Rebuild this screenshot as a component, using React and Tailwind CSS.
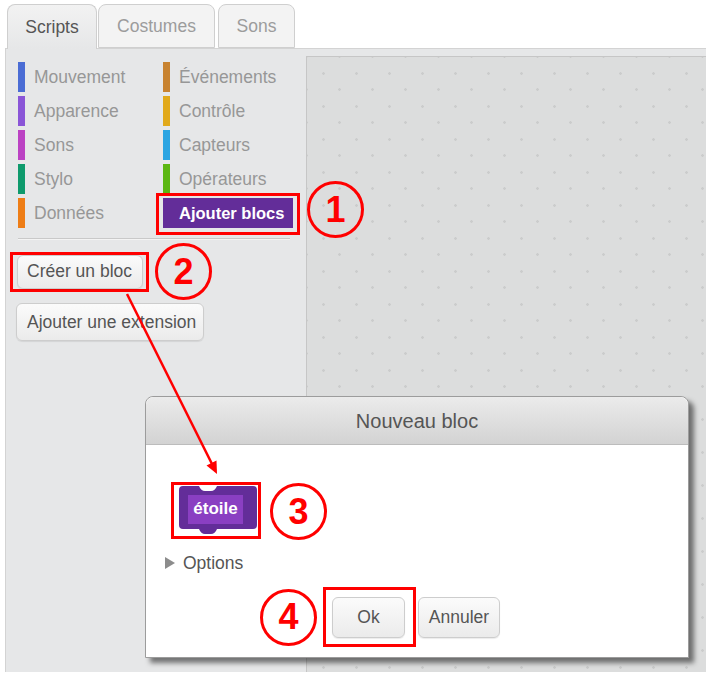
import React from "react";

const rows = [
  [
    { label: "Mouvement", bar: "bg-[#4a6cd4]" },
    { label: "Événements", bar: "bg-[#c88330]" },
  ],
  [
    { label: "Apparence", bar: "bg-[#8a55d7]" },
    { label: "Contrôle", bar: "bg-[#e1a91a]" },
  ],
  [
    { label: "Sons", bar: "bg-[#bb42c3]" },
    { label: "Capteurs", bar: "bg-[#2ca5e2]" },
  ],
  [
    { label: "Stylo", bar: "bg-[#0e9a6c]" },
    { label: "Opérateurs", bar: "bg-[#5cb712]" },
  ],
  [{ label: "Données", bar: "bg-[#ee7d16]" }, null],
];

function Tab({ label, active, className = "" }) {
  return (
    <div
      className={`flex items-center justify-center rounded-t-[8px] border border-[#cfcfcf] text-[17.5px] ${
        active
          ? "relative z-10 -mb-px h-[45px] border-b-0 bg-gradient-to-b from-[#f2f2f2] to-[#e6e7e8] text-[#555]"
          : "h-[44px] bg-[#f3f3f3] text-[#9c9c9c]"
      } ${className}`}
    >
      {label}
    </div>
  );
}

function Category({ item }) {
  return (
    <div className="flex h-[30px] items-center">
      <div className={`h-[30px] w-[7px] ${item.bar}`} />
      <span className="ml-[9px] text-[17.5px] text-[#979797]">{item.label}</span>
    </div>
  );
}

function Circle({ n, className = "" }) {
  return (
    <div
      className={`flex h-[57px] w-[57px] shrink-0 items-center justify-center rounded-full border-[3px] border-[#ff0000] text-[36px] font-bold leading-none text-[#ff0000] ${className}`}
    >
      {n}
    </div>
  );
}

function GrayButton({ children, className = "" }) {
  return (
    <div
      className={`flex items-center rounded-[6px] border border-[#cdcdcd] bg-gradient-to-b from-[#fbfbfb] to-[#ebebeb] text-[17.5px] text-[#555] shadow-[0_1px_1px_rgba(0,0,0,0.08)] ${className}`}
    >
      {children}
    </div>
  );
}

function Block() {
  return (
    <div className="relative h-[48px] w-[78px]">
      <svg width="78" height="48" viewBox="0 0 78 48" className="absolute left-0 top-0">
        <path
          d="M4 0 H20 Q22 5 26 5 H32 Q36 5 38 0 H74 Q78 0 78 4 V39 Q78 43 74 43 H38 Q36 48 32 48 H26 Q22 48 20 43 H4 Q0 43 0 39 V4 Q0 0 4 0 Z"
          fill="#632d99"
        />
      </svg>
      <div className="absolute left-[9px] top-[9px] flex h-[29px] w-[55px] items-center justify-center bg-[#8a3fc2] text-[17px] font-bold text-white">
        étoile
      </div>
    </div>
  );
}

export default function App() {
  return (
    <div className="relative h-[680px] w-[706px] overflow-hidden bg-white font-['Liberation_Sans',Arial,sans-serif]">
      {/* tabs */}
      <div className="flex h-[48px] items-end pl-[7px]">
        <Tab label="Scripts" active className="w-[90px]" />
        <Tab label="Costumes" className="ml-[1px] w-[117px]" />
        <Tab label="Sons" className="ml-[3px] w-[77px]" />
      </div>

      <div className="ml-[5px] flex h-[624px] border-l border-t border-[#d3d3d3] bg-[#e6e7e8]">
        {/* palette */}
        <div className="w-[300px] shrink-0 pt-[13px]">
          <div className="flex flex-col gap-[4px] pl-[12px]">
            {rows.map((row, i) => (
              <div key={i} className="grid grid-cols-[145px_1fr]">
                <Category item={row[0]} />
                {row[1] ? (
                  <Category item={row[1]} />
                ) : (
                  <div className="relative h-[30px]">
                    <div className="flex h-[30px] w-[130px] items-center bg-[#632d99] pl-[16px] text-[16.5px] font-bold text-white">
                      Ajouter blocs
                    </div>
                    <div className="absolute -left-[7px] -top-[5px] h-[42px] w-[144px] border-[3px] border-[#ff0000]" />
                  </div>
                )}
              </div>
            ))}
          </div>

          <div className="ml-[12px] mt-[10px] h-px w-[272px] bg-[#c9c9c9] shadow-[0_1px_0_#f4f4f4]" />

          <div className="ml-[4px] mt-[4px] flex items-center">
            <div className="flex h-[40px] w-[139px] items-center border-[3px] border-[#ff0000] pl-[4px]">
              <GrayButton className="h-[34px] w-[126px] pl-[9px]">Créer un bloc</GrayButton>
            </div>
            <Circle n="2" className="ml-[6px]" />
          </div>

          <GrayButton className="ml-[10px] mt-[3px] h-[38px] w-[188px] pl-[10px]">
            Ajouter une extension
          </GrayButton>
        </div>

        {/* script area */}
        <div className="mt-[7px] flex-1 border-l border-t border-[#c6c6c6] bg-[#dcdddd] bg-[radial-gradient(circle,#cbcccc_1px,transparent_1.6px),radial-gradient(circle,#cbcccc_1px,transparent_1.6px)] bg-[length:33px_33px] bg-[position:0_0,16px_16px]" />
      </div>

      {/* annotation 1 */}
      <Circle n="1" className="absolute left-[307px] top-[181px]" />

      {/* dialog */}
      <div className="absolute left-[145px] top-[396px] flex h-[262px] w-[544px] flex-col rounded-t-[8px] border border-[#9c9c9c] bg-white shadow-[5px_5px_5px_rgba(0,0,0,0.5)]">
        <div className="flex h-[48px] shrink-0 items-center justify-center rounded-t-[8px] border-b border-[#bcbcbc] bg-gradient-to-b from-[#ebebeb] to-[#d3d3d3] text-[20px] text-[#555]">
          Nouveau bloc
        </div>
        <div className="flex flex-col pl-[25px] pt-[35px]">
          <div className="flex items-center">
            <div className="h-[57px] w-[90px] border-[3px] border-[#ff0000] pl-[5px] pt-[1px]">
              <Block />
            </div>
            <Circle n="3" className="ml-[9px] mt-[3px]" />
          </div>

          <div className="-ml-[6px] mt-[13px] flex h-[20px] items-center">
            <svg width="10" height="12" viewBox="0 0 10 12">
              <path d="M0 0 L10 6 L0 12 Z" fill="#8c8c8c" />
            </svg>
            <span className="ml-[8px] text-[17.5px] text-[#555]">Options</span>
          </div>

          <div className="ml-[89px] mt-[14px] flex items-center">
            <Circle n="4" />
            <div className="ml-[6px] flex h-[60px] w-[93px] items-center border-[3px] border-[#ff0000] pl-[6px]">
              <GrayButton className="h-[41px] w-[73px] justify-center">Ok</GrayButton>
            </div>
            <GrayButton className="ml-[2px] h-[41px] w-[82px] justify-center">Annuler</GrayButton>
          </div>
        </div>
      </div>

      {/* arrow 2 -> 3 */}
      <svg className="pointer-events-none absolute left-0 top-0" width="706" height="680">
        <line x1="127" y1="294" x2="212" y2="464" stroke="#ff0000" strokeWidth="2.5" />
        <path d="M217 474 L206.5 465.5 L216.5 460.5 Z" fill="#ff0000" />
      </svg>
    </div>
  );
}
